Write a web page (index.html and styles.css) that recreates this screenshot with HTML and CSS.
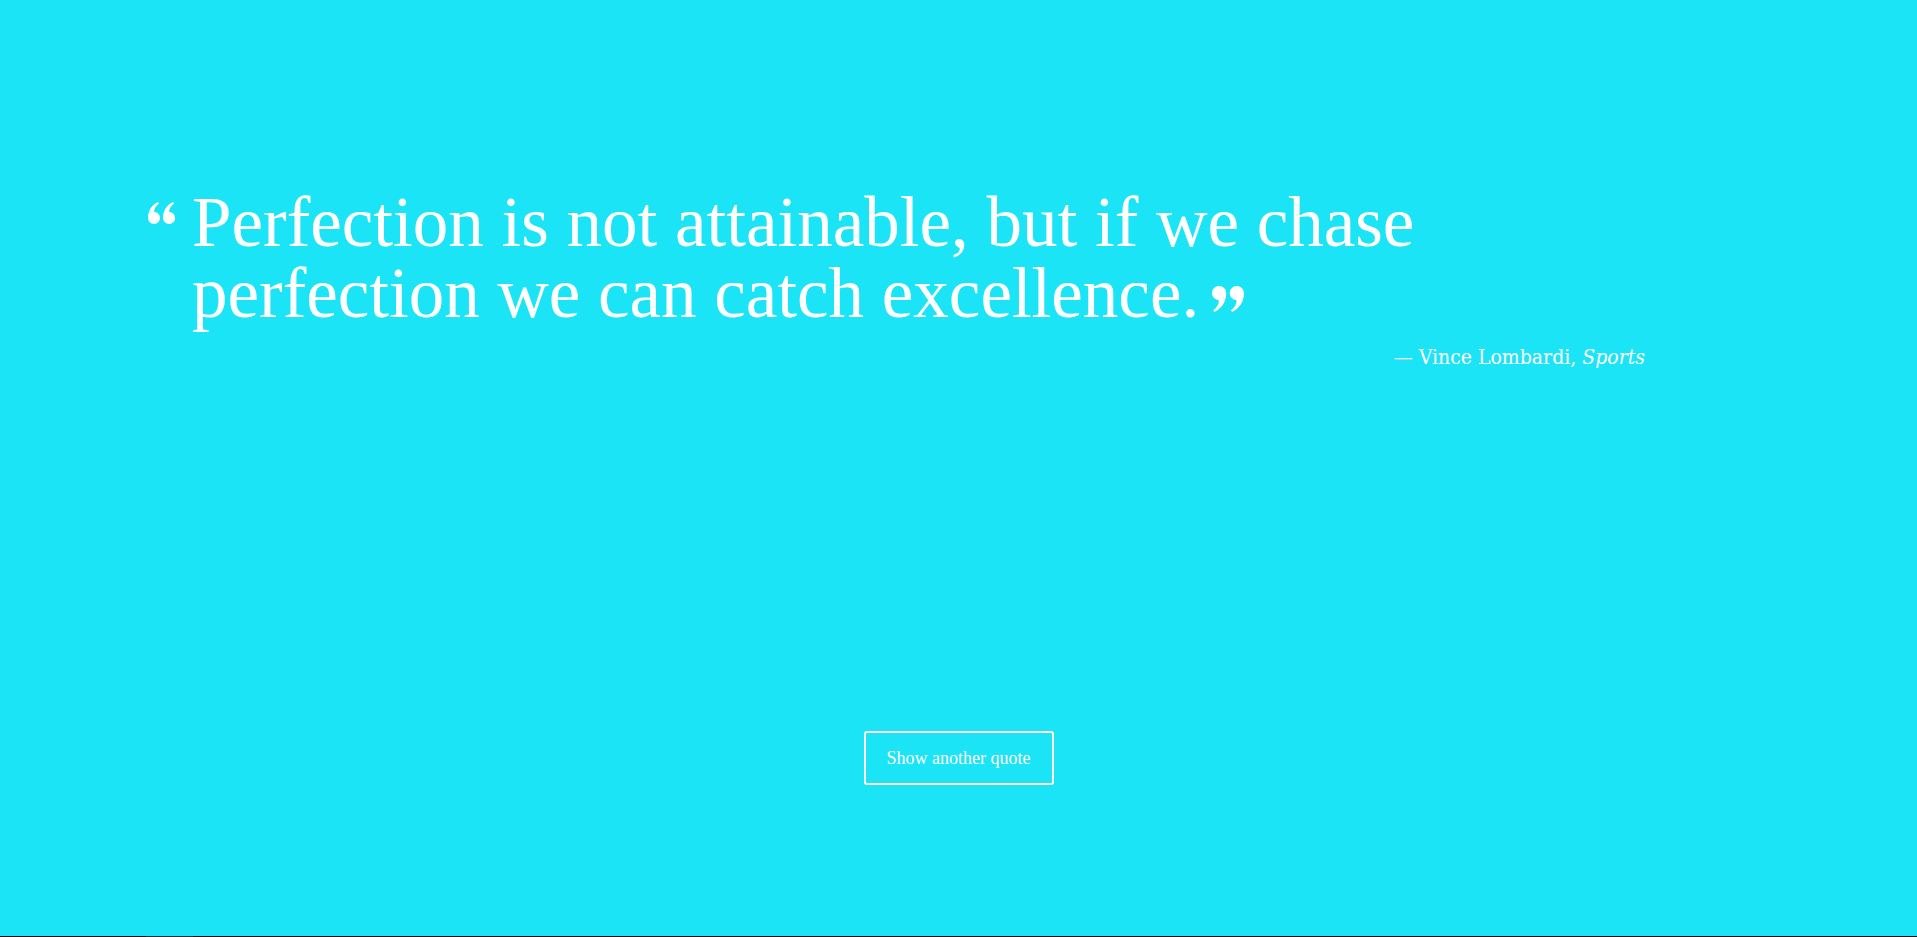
FILE: index.html
```html
<!DOCTYPE html>
<html lang="en">
<head>
<meta charset="utf-8">
<title>Random Quote</title>
<link rel="stylesheet" href="styles.css">
</head>
<body>
<div class="page">
  <main class="quote-area">
    <figure class="quote">
      <svg class="q-open" viewBox="0 0 27 22" aria-hidden="true">
        <path d="M6 22 A6 6 0 0 1 0 16 C0 9 3.5 3 10 0 L11 1.5 C7.5 4 6.2 7 6.2 10 A6 6 0 0 1 6 22 Z"/>
        <path transform="translate(15 0)" d="M6 22 A6 6 0 0 1 0 16 C0 9 3.5 3 10 0 L11 1.5 C7.5 4 6.2 7 6.2 10 A6 6 0 0 1 6 22 Z"/>
      </svg>
      <blockquote class="quote-text">Perfection is not attainable, but if we chase perfection we can catch excellence.<svg class="q-close" viewBox="0 0 27 22" aria-hidden="true"><g transform="rotate(180 13.5 11)"><path d="M6 22 A6 6 0 0 1 0 16 C0 9 3.5 3 10 0 L11 1.5 C7.5 4 6.2 7 6.2 10 A6 6 0 0 1 6 22 Z"/><path transform="translate(15 0)" d="M6 22 A6 6 0 0 1 0 16 C0 9 3.5 3 10 0 L11 1.5 C7.5 4 6.2 7 6.2 10 A6 6 0 0 1 6 22 Z"/></g></svg></blockquote>
    </figure>
    <p class="author">— Vince Lombardi, <em>Sports</em></p>
  </main>
  <div class="actions">
    <button class="btn" type="button">Show another quote</button>
  </div>
  <div class="bottom-line"><span></span></div>
</div>
</body>
</html>
```
FILE: styles.css
```css
html, body {
  margin: 0;
  padding: 0;
}
body {
  background: #1be4f7;
  color: #ffffff;
  font-family: "Liberation Serif", "Times New Roman", serif;
}
.page {
  height: 937px;
  display: flex;
  flex-direction: column;
  box-sizing: border-box;
}
.quote-area {
  padding: 187px 272px 0 148px;
}
.quote {
  margin: 0;
  display: flex;
  align-items: flex-start;
}
.q-open {
  width: 27px;
  height: 22px;
  fill: #ffffff;
  flex: none;
  margin: 15px 17px 0 0;
}
.quote-text {
  margin: 0;
  font-size: 71px;
  line-height: 71px;
}
.q-close {
  width: 32px;
  height: 26px;
  fill: #ffffff;
  margin-left: 13px;
  vertical-align: 5px;
}
.author {
  margin: 16px 0 0;
  text-align: right;
  font-family: "DejaVu Serif Condensed", "DejaVu Serif", serif;
  font-size: 21px;
  line-height: 24px;
}
.author em { font-style: italic; }
.actions {
  margin-top: auto;
  display: flex;
  justify-content: center;
  padding-bottom: 151px;
}
.btn {
  width: 190px;
  height: 54px;
  background: transparent;
  border: 2px solid #ffffff;
  border-radius: 3px;
  color: #ffffff;
  font-family: "Liberation Serif", serif;
  font-size: 18px;
  padding: 0;
}
.bottom-line {
  height: 1px;
  background: #0b0b0b;
}
.bottom-line span {
  display: block;
  margin-left: 146px;
  width: 47px;
  height: 1px;
  background: #2a2a2a;
}
```
